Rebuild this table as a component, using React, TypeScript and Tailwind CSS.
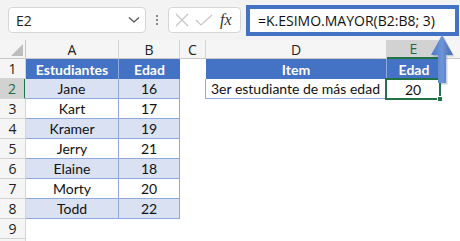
import React from "react";

const students = [
  ["Jane", "16"],
  ["Kart", "17"],
  ["Kramer", "19"],
  ["Jerry", "21"],
  ["Elaine", "18"],
  ["Morty", "20"],
  ["Todd", "22"],
];

const cellFont = { fontFamily: "Lato, 'Open Sans', sans-serif" };
const uiFont = { fontFamily: "'Open Sans', 'Noto Sans', sans-serif" };

const RowHead = ({ n, active }: { n?: number; active?: boolean }) => (
  <div
    className={
      "w-[26px] h-[20px] shrink-0 flex items-center justify-center text-[14px] border-b border-[#d4d4d4] " +
      (active
        ? "bg-[#d2d2d2] text-[#1e6b3f] border-r-2 border-r-[#217346]"
        : "bg-[#f5f5f5] text-[#222] border-r border-r-[#d4d4d4]")
    }
    style={uiFont}
  >
    {n}
  </div>
);

const ColHead = ({ w, label, active }: { w: string; label: string; active?: boolean }) => (
  <div
    className={
      w +
      " h-[19px] shrink-0 flex items-center justify-center text-[14px] border-r border-[#d4d4d4] " +
      (active ? "bg-[#d2d2d2] text-[#1e6b3f] border-b-2 border-b-[#217346]" : "bg-[#f5f5f5] text-[#222] border-b border-b-[#c8c8c8]")
    }
    style={uiFont}
  >
    {label}
  </div>
);

export default function App() {
  return (
    <div className="relative w-[460px] h-[241px] overflow-hidden bg-white">
      {/* formula bar */}
      <div className="h-[40px] bg-[#f3f3f3] flex items-center pl-[8px]">
        <div className="w-[138px] h-[26px] bg-white border border-[#d6d6d6] rounded-[4px] flex items-center justify-between pl-[7px] pr-[5px]">
          <span className="text-[14px] text-[#222]" style={uiFont}>E2</span>
          <svg width="12" height="8" viewBox="0 0 12 8">
            <path d="M1 1.5 L6 6 L11 1.5" fill="none" stroke="#555" strokeWidth="1.3" />
          </svg>
        </div>
        <div className="w-[22px] flex flex-col items-center gap-[2px]">
          <span className="w-[2px] h-[2px] bg-[#888]" />
          <span className="w-[2px] h-[2px] bg-[#888]" />
          <span className="w-[2px] h-[2px] bg-[#888]" />
        </div>
        <div className="w-[73px] h-[26px] bg-white border border-[#d6d6d6] rounded-[4px] flex items-center pl-[6px] gap-[6px]">
          <svg width="14" height="14" viewBox="0 0 14 14">
            <path d="M1 1 L13 13 M13 1 L1 13" stroke="#c6c6c6" strokeWidth="1.2" />
          </svg>
          <svg width="18" height="14" viewBox="0 0 18 14">
            <path d="M1 7 L6 12 L17 2" fill="none" stroke="#c6c6c6" strokeWidth="1.2" />
          </svg>
          <span className="text-[16px] italic text-[#333] ml-[1px]" style={{ fontFamily: "'Liberation Serif', serif" }}>
            fx
          </span>
        </div>
        <div className="ml-[5px] w-[213px] h-[31px] bg-white border-[4px] border-[#4472c4] flex items-center pl-[8px]">
          <span className="text-[14px] text-[#111]" style={uiFont}>
            =K.ESIMO.MAYOR(B2:B8; 3)
          </span>
        </div>
      </div>

      {/* column headers */}
      <div className="flex">
        <div className="w-[26px] h-[19px] shrink-0 bg-[#f5f5f5] border-r border-b border-[#c8c8c8] flex items-end justify-end p-[2px]">
          <svg width="12" height="12" viewBox="0 0 12 12">
            <path d="M12 0 L12 12 L0 12 Z" fill="#bdbdbd" />
          </svg>
        </div>
        <ColHead w="w-[93px]" label="A" />
        <ColHead w="w-[61px]" label="B" />
        <ColHead w="w-[26px]" label="C" />
        <ColHead w="w-[181px]" label="D" />
        <ColHead w="w-[54px]" label="E" active />
        <div className="flex-1 h-[19px] bg-[#f5f5f5] border-b border-[#c8c8c8]" />
      </div>

      {/* rows */}
      <div className="flex flex-col text-[14px]" style={cellFont}>
        <div className="flex">
          <RowHead n={1} />
          <div className="w-[93px] h-[20px] bg-[#4472c4] text-white font-bold flex items-center justify-center border-r border-[#8ea9db]">
            Estudiantes
          </div>
          <div className="w-[61px] h-[20px] bg-[#4472c4] text-white font-bold flex items-center justify-center">
            Edad
          </div>
          <div className="w-[26px]" />
          <div className="w-[181px] h-[20px] bg-[#4472c4] text-white font-bold flex items-center justify-center border-r border-[#8ea9db]">
            Item
          </div>
          <div className="w-[54px] h-[20px] bg-[#4472c4] text-white font-bold flex items-center justify-center">
            Edad
          </div>
        </div>
        {students.map(([name, age], i) => {
          const shade = i % 2 === 0 ? "bg-[#d9e1f2]" : "bg-white";
          return (
            <div className="flex" key={name}>
              <RowHead n={i + 2} active={i === 0} />
              <div
                className={
                  "h-[20px] text-[#111] flex items-center justify-center border-r border-b border-[#8ea9db] " +
                  shade +
                  (i === 0 ? " -ml-[1px] w-[94px]" : " w-[93px]")
                }
              >
                {name}
              </div>
              <div className={"w-[61px] h-[20px] text-[#111] flex items-center justify-center border-r border-b border-[#8ea9db] " + shade}>
                {age}
              </div>
              {i === 0 && (
                <>
                  <div className="w-[25px]" />
                  <div className="w-[181px] h-[20px] text-[#111] whitespace-nowrap flex items-center pl-[5px] border-l border-b border-[#8ea9db]">
                    3er estudiante de más edad
                  </div>
                  <div className="relative w-[54px] h-[20px] text-[#111] flex items-center justify-center">
                    20
                    <span className="absolute -left-[1px] -top-[1px] -right-[1px] -bottom-[1px] border-2 border-[#217346]" />
                    <span className="absolute -right-[3px] -bottom-[3px] w-[6px] h-[6px] bg-[#217346] border border-white" />
                  </div>
                </>
              )}
            </div>
          );
        })}
        <div className="flex">
          <RowHead n={9} />
        </div>
        <div className="flex">
          <RowHead />
        </div>
      </div>

      {/* pointer arrow */}
      <svg className="absolute left-[428px] top-[33px]" width="28" height="54" viewBox="0 0 28 54">
        <defs>
          <linearGradient id="shaft" x1="0" x2="1" y1="0" y2="0">
            <stop offset="0" stopColor="#4a78c8" />
            <stop offset="0.5" stopColor="#6f95d8" />
            <stop offset="1" stopColor="#4169b3" />
          </linearGradient>
        </defs>
        <path d="M14 2 L25 22 L18 22 L18 50 L10 50 L10 22 L3 22 Z" fill="#2f4f8a" opacity="0.25" transform="translate(1.5 1.5)" />
        <path d="M14 2 L25 22 L18 22 L18 50 L10 50 L10 22 L3 22 Z" fill="url(#shaft)" />
      </svg>
    </div>
  );
}
